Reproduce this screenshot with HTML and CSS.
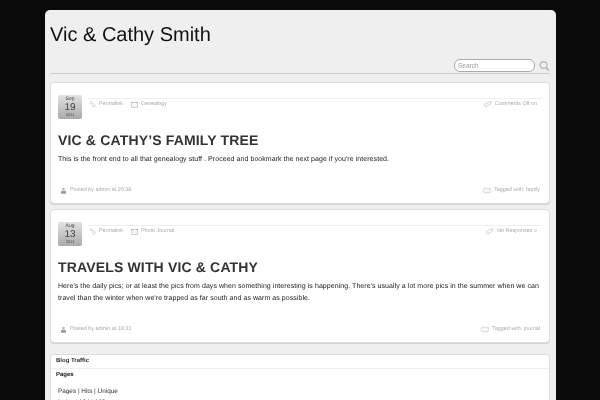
FILE: index.html
```html
<!DOCTYPE html>
<html lang="en">
<head>
<meta charset="utf-8">
<title>Vic &amp; Cathy Smith</title>
<link rel="stylesheet" href="styles.css">
</head>
<body>
<svg class="defs" width="0" height="0">
  <symbol id="i-clip" viewBox="0 0 10 10"><path d="M1 2.500 3 1l2 2-1.500 1.500L2.500 3M4.500 5 6 3.500 9 6.500 7 9 4 6" fill="none" stroke="#bbb"/></symbol>
  <symbol id="i-cat" viewBox="0 0 10 10"><rect x="1" y="2" width="8" height="7" fill="#f7f7f7" stroke="#bbb"/><path d="M0.500 2h2M7.500 2h2" stroke="#999"/></symbol>
  <symbol id="i-bubble" viewBox="0 0 12 10"><path d="M1 5 7 1.500 11 1 10 5 5 7 4 9.500 3 7.500 1 7z" fill="#f7f7f7" stroke="#ccc"/></symbol>
  <symbol id="i-user" viewBox="0 0 10 10"><circle cx="5" cy="3" r="2" fill="#bbb"/><path d="M1.500 9.500V6.500L3 5.500h4l1.500 1v3z" fill="#999"/></symbol>
  <symbol id="i-tag" viewBox="0 0 12 8"><path d="M3 1h8v6H3L1 4z" fill="#f8f8f8" stroke="#ccc"/></symbol>
</svg>
<div class="page">
  <header class="masthead">
    <h1 class="site-title">Vic &amp; Cathy Smith</h1>
    <form class="search">
      <input class="search-input" type="text" placeholder="Search">
      <svg class="search-icon" width="11" height="12" viewBox="0 0 12 12"><circle cx="5" cy="5" r="3.700" fill="none" stroke="#bbb" stroke-width="1.500"/><path d="M8 8l3 3" stroke="#bbb" stroke-width="2"/></svg>
    </form>
  </header>

  <article class="card post">
    <div class="post-top">
      <div class="date"><span class="mon">Sep</span><span class="day">19</span><span class="yr">2011</span></div>
      <div class="meta">
        <span class="meta-item"><svg class="ic"><use href="#i-clip"/></svg>Permalink</span>
        <span class="meta-item"><svg class="ic"><use href="#i-cat"/></svg>Genealogy</span>
        <span class="meta-item right"><svg class="ic-w"><use href="#i-bubble"/></svg>Comments Off on</span>
      </div>
    </div>
    <h2 class="post-title">VIC &amp; CATHY’S FAMILY TREE</h2>
    <p class="post-text">This is the front end to all that genealogy stuff . Proceed and bookmark the next page if you're interested.</p>
    <div class="post-foot">
      <span class="meta-item"><svg class="ic"><use href="#i-user"/></svg>Posted by admin at 20:38</span>
      <span class="meta-item"><svg class="ic-w"><use href="#i-tag"/></svg>Tagged with: family</span>
    </div>
  </article>

  <article class="card post">
    <div class="post-top">
      <div class="date"><span class="mon">Aug</span><span class="day">13</span><span class="yr">2011</span></div>
      <div class="meta">
        <span class="meta-item"><svg class="ic"><use href="#i-clip"/></svg>Permalink</span>
        <span class="meta-item"><svg class="ic"><use href="#i-cat"/></svg>Photo Journal</span>
        <span class="meta-item right"><svg class="ic-w"><use href="#i-bubble"/></svg>No Responses »</span>
      </div>
    </div>
    <h2 class="post-title">TRAVELS WITH VIC &amp; CATHY</h2>
    <p class="post-text">Here's the daily pics; or at least the pics from days when something interesting is happening. There's usually a lot more pics in the summer when we can travel than the winter when we're trapped as far south and as warm as possible.</p>
    <div class="post-foot">
      <span class="meta-item"><svg class="ic"><use href="#i-user"/></svg>Posted by admin at 19:33</span>
      <span class="meta-item"><svg class="ic-w"><use href="#i-tag"/></svg>Tagged with: journal</span>
    </div>
  </article>

  <section class="card widget">
    <h3 class="widget-title">Blog Traffic</h3>
    <div class="widget-body">
      <h4 class="widget-sub">Pages</h4>
      <p class="widget-text">Pages | Hits | Unique</p>
      <p class="widget-row">Index | 134 | 103</p>
    </div>
  </section>
</div>
</body>
</html>
```

FILE: styles.css
```css
html, body { margin: 0; height: 400px; overflow: hidden; }
body { background: #0a0a0a; font-family: "Liberation Sans", Arial, sans-serif; text-rendering: geometricPrecision; }
.defs { position: absolute; }
.page { width: 500px; margin: 10px 0 0 45px; padding: 0 6px 0 5px; background: #efefef; border-radius: 5px 5px 0 0; will-change: transform; }
.masthead { display: flex; flex-direction: column; height: 63px; border-bottom: 1px solid #ccc; margin-bottom: 8px; }
.site-title { margin: 0; padding-top: 12px; height: 27px; font-size: 20px; line-height: 27px; font-weight: 400; color: #111; }
.search { display: flex; justify-content: flex-end; align-items: center; gap: 4px; padding: 10px 0 0; }
.search-input { box-sizing: border-box; width: 81px; height: 13px; padding: 0 3px; border: 1px solid #aaa; border-radius: 6px; background: #fff; font: 6.500px "Liberation Sans", Arial, sans-serif; }
.search-input::placeholder { color: #999; opacity: 1; }
.search-icon { margin: 1px 0 0 0; }
.card { background: #fff; border: 1px solid #ddd; border-radius: 4px; margin-bottom: 5px; box-shadow: 0 1px 0 #d4d4d4; }
.post { padding: 12px 7px 0; }
.post-top { display: flex; gap: 6px; height: 24px; }
.date { flex: none; width: 24px; height: 24px; display: flex; flex-direction: column; align-items: center; border-radius: 2px; background: linear-gradient(#e2e2e2, #aaa); color: #444; }
.mon { font-size: 5px; line-height: 7px; margin-top: 1px; }
.day { font-size: 10px; line-height: 9px; }
.yr { font-size: 4px; line-height: 6px; }
.meta { flex: 1; display: flex; gap: 8px; height: 12px; margin-top: 3px; padding: 1px 5px 0 1px; border-top: 1px solid #eee; }
.meta-item { display: flex; align-items: center; gap: 3px; height: 8px; font-size: 5.400px; color: #aaa; }
.right { margin-left: auto; }
.ic { width: 7px; height: 7px; }
.ic-w { width: 9px; height: 7px; }
.post-title { margin: 13px 0 0; font-size: 14px; line-height: 17px; font-weight: 700; color: #333; letter-spacing: .16px; }
.post-text { margin: 5px 0 0; font-size: 7px; line-height: 12px; color: #222; letter-spacing: .06px; }
.post-foot { display: flex; justify-content: space-between; margin-top: 20px; padding: 0 2px 9px 2px; }
.widget { height: 60px; margin-top: 11px; }
.widget-title { margin: 0; padding: 0 5px; height: 13px; font-size: 6px; line-height: 13px; font-weight: 700; color: #333; border-bottom: 1px solid #eee; }
.widget-body { padding: 0 5px; }
.widget-sub { margin: 2px 0 0; font-size: 6px; line-height: 8px; font-weight: 700; color: #111; }
.widget-text { margin: 9px 0 0 2px; font-size: 6.400px; line-height: 8px; color: #333; }
.widget-row { margin: 3px 0 0 2px; font-size: 6.400px; line-height: 8px; color: #333; }
```
